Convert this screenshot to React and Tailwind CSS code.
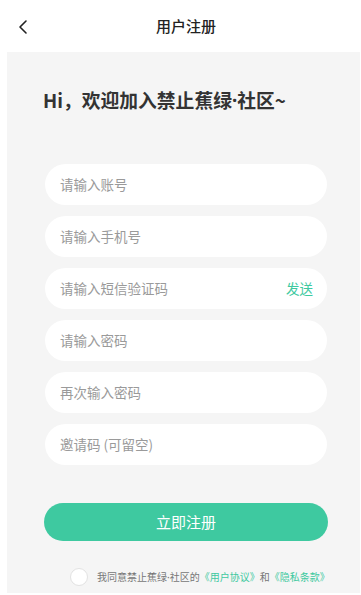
import React from "react";

const font = { fontFamily: '"Noto Sans CJK SC", "Noto Sans", sans-serif' };
const latin = { fontFamily: '"Noto Sans", sans-serif' };

function Field({ placeholder, right }) {
  return (
    <div className="flex h-[41px] w-[282px] items-center justify-between rounded-full bg-white pl-[15px] pr-[14px]">
      <span className="text-[13.5px] text-[#9a9a9a]">{placeholder}</span>
      {right && <span className="text-[13.5px] text-[#3ec9a0]">{right}</span>}
    </div>
  );
}

export default function App() {
  return (
    <div className="flex h-[595px] w-[361px] flex-col bg-white" style={font}>
      <div className="relative flex h-[52px] items-center justify-center pl-[11px]">
        <svg className="absolute left-[17px] top-[19px]" width="12" height="16" viewBox="0 0 12 16" fill="none">
          <polyline points="9,2 3,8 9,14" stroke="#222" strokeWidth="1.6" strokeLinecap="round" strokeLinejoin="round" />
        </svg>
        <span className="text-[15px] font-medium text-[#222]">用户注册</span>
      </div>
      <div className="ml-[7px] flex h-[541px] w-[353px] flex-col bg-[#f5f5f5]">
        <div className="mt-[36px] ml-[36px] flex h-[24px] items-center text-[18.8px] font-bold text-[#333]">
          Hi，欢迎加入禁止蕉绿<span style={latin}>·</span>社区~
        </div>
        <div className="ml-[38px] mt-[52px] flex flex-col gap-[11px]">
          <Field placeholder="请输入账号" />
          <Field placeholder="请输入手机号" />
          <Field placeholder="请输入短信验证码" right="发送" />
          <Field placeholder="请输入密码" />
          <Field placeholder="再次输入密码" />
          <Field placeholder="邀请码 (可留空)" />
        </div>
        <button className="ml-[37px] mt-[38px] flex h-[38px] w-[284px] items-center justify-center rounded-full bg-[#3ec9a0] text-[15px] text-white">
          立即注册
        </button>
        <div className="ml-[63px] mt-[27px] flex items-center">
          <div className="h-[18px] w-[18px] rounded-full border border-[#e2e2e2] bg-white" />
          <span className="ml-[9px] text-[10px] text-[#777]">
            我同意禁止蕉绿<span style={latin}>·</span>社区的<span className="text-[#3ec9a0]">《用户协议》</span>和<span className="text-[#3ec9a0]">《隐私条款》</span>
          </span>
        </div>
      </div>
    </div>
  );
}
